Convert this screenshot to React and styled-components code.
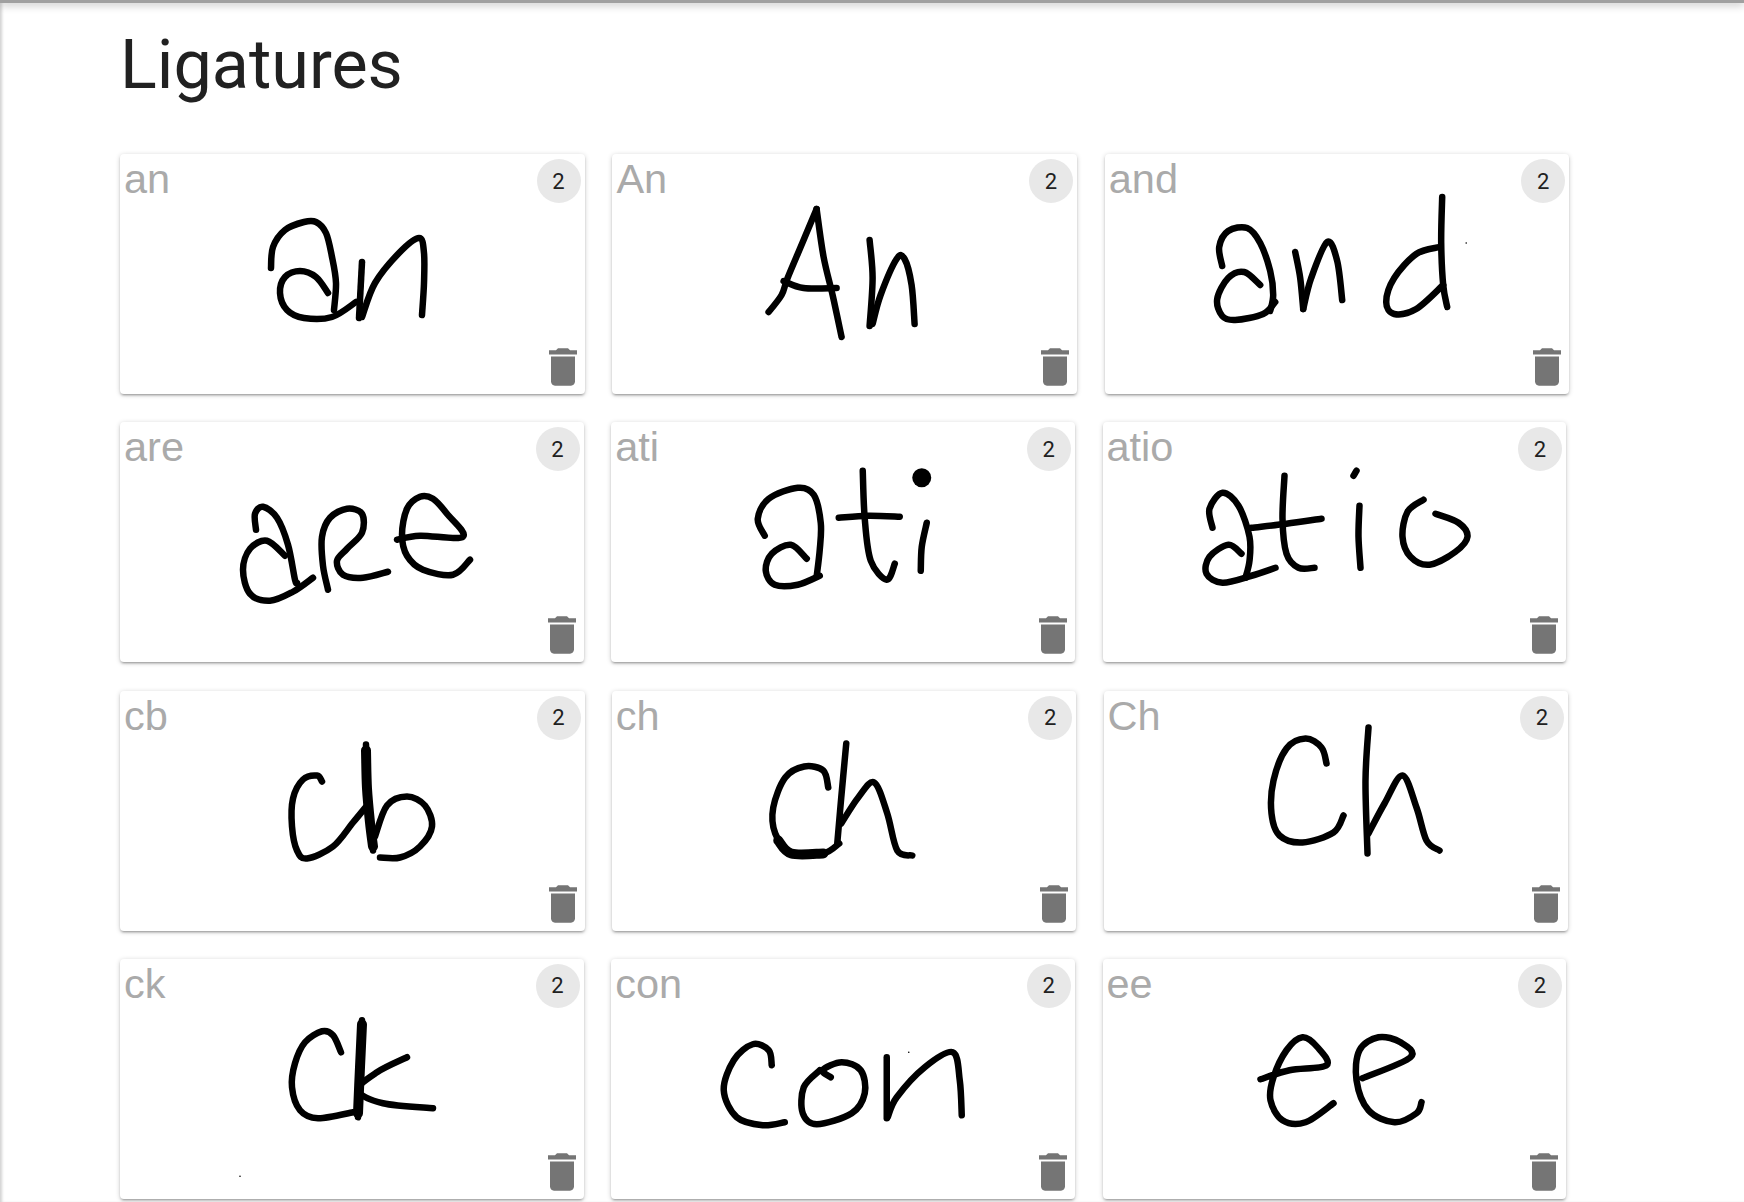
import styled, { createGlobalStyle } from "styled-components";

const GlobalStyle = createGlobalStyle`
  html, body {
    margin: 0;
    height: 100%;
    overflow: hidden;
    background: #fff;
    font-family: Roboto, "Liberation Sans", sans-serif;
  }
`;

const Page = styled.div`
  height: 1202px;
  overflow: hidden;
  box-shadow: inset 3px 0 3px -1px rgba(0, 0, 0, 0.18);
`;
const TopEdge = styled.div`
  height: 3px;
  background: #a0a0a0;
  box-shadow: 0 1px 8px rgba(0, 0, 0, 0.45);
`;
const Content = styled.main`
  padding: 26.5px 0 0 120px;
`;
const Title = styled.h1`
  margin: 0 0 54.5px;
  font-size: 68.3px;
  line-height: 70px;
  font-weight: 400;
  color: #212121;
`;
const Rows = styled.div`
  display: flex;
  flex-direction: column;
  gap: 28.25px;
`;
const Row = styled.div`
  display: flex;
  gap: ${(p) => p.$gap}px;
`;
const Card = styled.div`
  position: relative;
  flex: none;
  width: ${(p) => p.$width}px;
  height: 240px;
  background: #fff;
  border-radius: 4px;
  box-shadow: 0 1px 5px rgba(0, 0, 0, 0.2), 0 2px 2px rgba(0, 0, 0, 0.14), 0 3px 1px -2px rgba(0, 0, 0, 0.12);
`;
const Drawing = styled.svg`
  display: block;
  width: 100%;
  height: 100%;
`;
const Label = styled.span`
  position: absolute;
  top: 2px;
  left: 4px;
  font-family: "Liberation Sans", Arial, sans-serif;
  font-size: 41.5px;
  line-height: 46px;
  color: #aaa;
`;
const Badge = styled.span`
  position: absolute;
  top: 5px;
  right: 4px;
  width: 44px;
  height: 44px;
  border-radius: 50%;
  background: #e8e8e8;
  color: #212121;
  font-size: 22px;
  display: flex;
  align-items: center;
  justify-content: center;
`;
const DeleteBtn = styled.button`
  position: absolute;
  right: -2px;
  bottom: 2px;
  width: 48px;
  height: 50px;
  padding: 0;
  border: none;
  background: none;
  color: #757575;
  & svg {
    display: block;
    width: 100%;
    height: 100%;
    fill: currentColor;
  }
`;

// handwriting samples, traced in page coordinates
const rows = [
  {
    top: 154,
    width: 464.5,
    gap: 27.9,
    cards: [
      {
        label: "an",
        strokes: [
          [271, 268, 273, 247, 285, 230, 304, 222, 316, 222, 326, 233, 332, 257, 336, 283, 334, 310],
          [328, 293, 316, 277, 300, 271, 285, 277, 280, 293, 287, 310, 304, 318, 332, 317, 356, 302],
          [362, 262, 359, 318],
          [362, 317, 375, 283, 399, 253, 419, 238, 424, 253, 424, 283, 422, 315],
        ],
      },
      {
        label: "An",
        strokes: [
          [817, 209, 804, 240, 788, 278, 782, 295, 769, 312],
          [817, 209, 824, 257, 833, 295, 842, 337],
          [784, 281, 804, 288, 837, 288],
          [870, 240, 873, 278, 870, 326],
          [873, 324, 881, 295, 897, 259, 905, 259, 912, 285, 915, 324],
        ],
      },
      {
        label: "and",
        strokes: [
          [1222, 266, 1219, 247, 1228, 231, 1247, 228, 1260, 243, 1270, 271, 1273, 295, 1270, 311],
          [1260, 285, 1244, 272, 1228, 278, 1217, 299, 1222, 316, 1235, 320, 1263, 314, 1275, 302],
          [1295, 252, 1300, 278, 1303, 309],
          [1303, 309, 1311, 278, 1327, 242, 1337, 261, 1342, 300],
          [1442, 197, 1441, 243, 1443, 285, 1447, 307],
          [1439, 247, 1416, 254, 1394, 278, 1386, 302, 1394, 314, 1416, 309, 1443, 285],
        ],
        dots: [[1466, 243, 0.8]],
      },
    ],
  },
  {
    top: 422.25,
    width: 463.5,
    gap: 27.75,
    cards: [
      {
        label: "are",
        strokes: [
          [256, 530, 255, 514, 263, 507, 277, 518, 288, 545, 295, 580, 297, 583],
          [285, 556, 267, 541, 250, 549, 243, 570, 250, 594, 270, 601, 293, 592, 313, 578],
          [328, 590, 323, 566, 322, 537, 330, 518, 347, 509, 362, 514, 362, 533, 347, 549, 337, 561, 343, 575, 363, 578, 388, 572],
          [397, 540, 420, 536, 463, 537, 447, 514, 433, 499, 420, 497, 407, 509, 402, 535, 407, 556, 423, 570, 453, 575, 470, 560],
        ],
      },
      {
        label: "ati",
        strokes: [
          [765, 536, 758, 519, 769, 499, 798, 488, 814, 495, 821, 523, 820, 550, 817, 576],
          [807, 559, 791, 545, 772, 554, 766, 571, 775, 585, 798, 585, 820, 576],
          [863, 471, 865, 519, 871, 561, 887, 580, 895, 564],
          [839, 518, 868, 516, 900, 517],
          [927, 523, 922, 547, 921, 571],
        ],
        dots: [[922, 478, 9.5]],
      },
      {
        label: "atio",
        strokes: [
          [1212, 528, 1209, 509, 1222, 493, 1238, 506, 1249, 537, 1249, 561, 1245, 578],
          [1241, 554, 1228, 545, 1209, 557, 1206, 574, 1222, 583, 1251, 576, 1275, 568],
          [1284, 476, 1282, 519, 1286, 554, 1298, 568, 1314, 568],
          [1251, 528, 1286, 524, 1321, 519],
          [1359, 506, 1358, 537, 1360, 568],
          [1356, 471, 1353, 476],
          [1423, 500, 1407, 512, 1402, 537, 1410, 557, 1429, 565, 1455, 552, 1467, 537, 1458, 523, 1435, 514],
        ],
      },
    ],
  },
  {
    top: 690.5,
    width: 464.5,
    gap: 27.25,
    cards: [
      {
        label: "cb",
        strokes: [
          [322, 781, 317, 775, 303, 779, 293, 798, 292, 826, 297, 850, 307, 858, 333, 846, 353, 822, 367, 805],
          [366, 744, 367, 788, 370, 822, 373, 850],
          [375, 836, 387, 805, 407, 796, 425, 805, 432, 826, 420, 846, 400, 857, 380, 857],
        ],
        heavy: [[366, 750, 367, 788, 370, 822, 373, 846]],
      },
      {
        label: "ch",
        strokes: [
          [828, 787, 823, 770, 804, 766, 785, 777, 773, 807, 775, 833, 791, 853, 823, 853, 839, 843],
          [846, 743, 841, 797, 837, 843],
          [841, 823, 858, 797, 874, 782, 887, 813, 897, 850, 912, 855],
        ],
        heavy: [[778, 840, 791, 853, 823, 853]],
      },
      {
        label: "Ch",
        strokes: [
          [1326, 763, 1321, 747, 1305, 738, 1286, 748, 1273, 780, 1271, 813, 1279, 835, 1302, 842, 1333, 832, 1343, 815],
          [1368, 727, 1365, 780, 1367, 853],
          [1368, 833, 1384, 803, 1402, 775, 1416, 807, 1426, 840, 1439, 850],
        ],
      },
    ],
  },
  {
    top: 958.75,
    width: 463.5,
    gap: 27.75,
    cards: [
      {
        label: "ck",
        strokes: [
          [341, 1052, 333, 1035, 322, 1031, 305, 1042, 295, 1063, 292, 1087, 300, 1110, 318, 1118, 353, 1112],
          [362, 1020, 360, 1067, 358, 1117],
          [407, 1057, 377, 1072, 358, 1090, 383, 1103, 433, 1108],
        ],
        heavy: [[362, 1024, 360, 1067, 358, 1113]],
        dots: [[240, 1176, 0.8]],
      },
      {
        label: "con",
        strokes: [
          [772, 1065, 769, 1050, 753, 1044, 734, 1060, 724, 1090, 737, 1117, 763, 1125, 785, 1122],
          [831, 1077, 823, 1070, 842, 1062, 861, 1070, 865, 1093, 852, 1113, 817, 1124, 803, 1113, 804, 1087, 820, 1070],
          [887, 1057, 887, 1090, 887, 1118],
          [888, 1117, 897, 1097, 925, 1067, 953, 1052, 960, 1080, 962, 1115],
        ],
        dots: [[909, 1052, 0.8]],
      },
      {
        label: "ee",
        strokes: [
          [1260, 1079, 1289, 1070, 1326, 1065, 1317, 1047, 1302, 1037, 1286, 1050, 1273, 1077, 1270, 1100, 1282, 1120, 1305, 1122, 1333, 1103],
          [1362, 1078, 1410, 1057, 1400, 1042, 1378, 1037, 1359, 1050, 1356, 1080, 1368, 1110, 1394, 1122, 1416, 1113, 1421, 1102],
        ],
      },
    ],
  },
];

// catmull-rom through the traced points
function smooth(pts) {
  const p = [];
  for (let i = 0; i < pts.length; i += 2) p.push([pts[i], pts[i + 1]]);
  let d = `M${p[0][0]} ${p[0][1]}`;
  for (let i = 0; i < p.length - 1; i++) {
    const a = p[i - 1] || p[i];
    const b = p[i];
    const c = p[i + 1];
    const e = p[i + 2] || c;
    const c1x = b[0] + (c[0] - a[0]) / 6;
    const c1y = b[1] + (c[1] - a[1]) / 6;
    const c2x = c[0] - (e[0] - b[0]) / 6;
    const c2y = c[1] - (e[1] - b[1]) / 6;
    d += `C${c1x.toFixed(1)} ${c1y.toFixed(1)} ${c2x.toFixed(1)} ${c2y.toFixed(1)} ${c[0]} ${c[1]}`;
  }
  return d;
}

function TrashIcon() {
  return (
    <svg viewBox="0 0 24 24" preserveAspectRatio="none">
      <path d="M6 19c0 1.1.9 2 2 2h8c1.1 0 2-.9 2-2V7H6v12zM19 4h-3.5l-1-1h-5l-1 1H5v2h14V4z" />
    </svg>
  );
}

function Sample({ card, x, top, width }) {
  return (
    <Card $width={width}>
      <Drawing viewBox={`${x} ${top} ${width} 240`} role="img" aria-label={card.label}>
        <g fill="none" stroke="#000" strokeWidth="6.5" strokeLinecap="round" strokeLinejoin="round">
          {card.strokes.map((s, i) => (
            <path key={i} d={smooth(s)} />
          ))}
          {card.heavy && card.heavy.map((s, i) => <path key={i} d={smooth(s)} strokeWidth="10" />)}
        </g>
        {card.dots && card.dots.map((d, i) => <circle key={i} cx={d[0]} cy={d[1]} r={d[2]} fill="#000" />)}
      </Drawing>
      <Label>{card.label}</Label>
      <Badge>2</Badge>
      <DeleteBtn aria-label="Delete">
        <TrashIcon />
      </DeleteBtn>
    </Card>
  );
}

export default function App() {
  return (
    <Page>
      <GlobalStyle />
      <TopEdge />
      <Content>
        <Title>Ligatures</Title>
        <Rows>
          {rows.map((r) => (
            <Row key={r.top} $gap={r.gap}>
              {r.cards.map((c, i) => (
                <Sample key={c.label} card={c} x={120 + i * (r.width + r.gap)} top={r.top} width={r.width} />
              ))}
            </Row>
          ))}
        </Rows>
      </Content>
    </Page>
  );
}
